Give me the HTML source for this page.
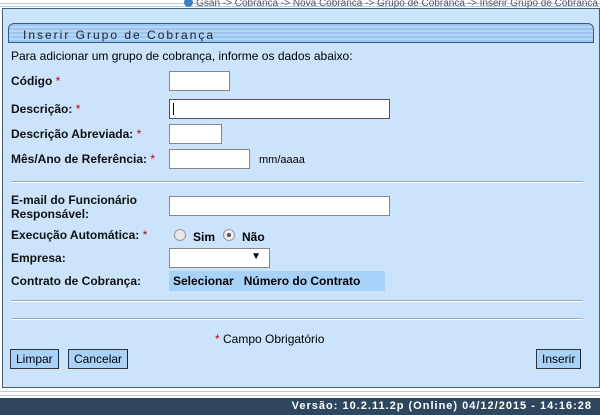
<!DOCTYPE html>
<html><head><meta charset="utf-8"><style>
*{margin:0;padding:0;box-sizing:border-box}
body{width:600px;height:415px;overflow:hidden;background:#fff;font-family:"Liberation Sans",Arial,sans-serif;font-size:12px;color:#000;position:relative}
.a{position:absolute}
.crumb{top:-2px;right:2px;font-size:10px;color:#556;white-space:nowrap}
.topline{top:3px;left:0;width:600px;height:4px;border-top:1px solid #b9cde0;border-bottom:1px solid #b9cde0}
.panel{top:8px;left:2px;width:598px;height:380px;background:#cbe3fb;border:1px solid #3f5f80}
.title{top:23px;left:8px;width:586px;height:20px;border:1px solid #3a5a7a;border-radius:6px 6px 0 0;background:repeating-linear-gradient(#9cc6f0 0 2px,#b6d6f6 2px 4px);font-size:12px;letter-spacing:2px;padding:4px 0 0 14px;color:#223}
.lbl{left:11px;font-weight:bold;font-size:12px;color:#111}
.req{color:#c00;font-weight:normal}
.inp{background:#fff;border:1px solid #888;height:20px}
.sep{left:11px;width:572px;height:2px;border-top:1px solid #9ab;border-bottom:1px solid #fff}
.btn{top:349px;height:20px;background:#a9d2f8;border:1px solid #333;border-right-color:#222;font-size:12px;padding:2px 5px}
.radio{width:12px;height:12px;border-radius:50%;border:1px solid #999;background:#e8e8e8}
.footer{top:398px;left:0;width:600px;height:17px;background:#2f475e;color:#fff;font-weight:bold;font-size:11px;letter-spacing:1px;text-align:right;padding:2px 8px 0 0}
.bottomline{top:391px;left:0;width:600px;height:5px;border-top:1px solid #b9cde0;border-bottom:1px solid #b9cde0}
</style></head><body>
<div class="a topline"></div>
<div class="a crumb"><span style="display:inline-block;width:9px;height:9px;border-radius:50%;background:#3b7fc4;vertical-align:-1px"></span> Gsan -&gt; Cobranca -&gt; Nova Cobranca -&gt; Grupo de Cobranca -&gt; Inserir Grupo de Cobranca</div>
<div class="a panel"></div>
<div class="a title">Inserir Grupo de Cobrança</div>
<div class="a" style="top:49px;left:11px">Para adicionar um grupo de cobrança, informe os dados abaixo:</div>
<div class="a lbl" style="top:74px">Código <span class="req">*</span></div>
<div class="a inp" style="top:71px;left:169px;width:61px"></div>
<div class="a lbl" style="top:102px">Descrição: <span class="req">*</span></div>
<div class="a inp" style="top:99px;left:169px;width:221px;border-color:#555"><div style="position:absolute;left:3px;top:3px;width:1px;height:12px;background:#000"></div></div>
<div class="a lbl" style="top:127px">Descrição Abreviada: <span class="req">*</span></div>
<div class="a inp" style="top:124px;left:169px;width:53px"></div>
<div class="a lbl" style="top:152px">Mês/Ano de Referência: <span class="req">*</span></div>
<div class="a inp" style="top:149px;left:169px;width:81px"></div>
<div class="a" style="top:154px;left:259px;font-size:11px">mm/aaaa</div>
<div class="a sep" style="top:181px"></div>
<div class="a lbl" style="top:193px;line-height:14px">E-mail do Funcionário<br>Responsável:</div>
<div class="a inp" style="top:196px;left:169px;width:221px"></div>
<div class="a lbl" style="top:228px">Execução Automática: <span class="req">*</span></div>
<div class="a radio" style="top:229px;left:174px"></div>
<div class="a" style="top:230px;left:193px;font-weight:bold">Sim</div>
<div class="a radio" style="top:229px;left:223px;background:#eee"><div style="position:absolute;left:3px;top:3px;width:4px;height:4px;border-radius:50%;background:#555"></div></div>
<div class="a" style="top:230px;left:242px;font-weight:bold">Não</div>
<div class="a lbl" style="top:251px">Empresa:</div>
<div class="a inp" style="top:248px;left:169px;width:101px"><span style="position:absolute;right:8px;top:2px;font-size:10px">▼</span></div>
<div class="a lbl" style="top:274px">Contrato de Cobrança:</div>
<div class="a" style="top:271px;left:169px;width:216px;height:20px;background:#a9d2f8;font-weight:bold;padding:3px 0 0 4px">Selecionar &nbsp;&nbsp;Número do Contrato</div>
<div class="a sep" style="top:300px"></div>
<div class="a sep" style="top:318px"></div>
<div class="a" style="top:332px;left:215px"><span style="color:#c00">*</span> Campo Obrigatório</div>
<div class="a btn" style="left:10px">Limpar</div>
<div class="a btn" style="left:68px">Cancelar</div>
<div class="a btn" style="left:536px">Inserir</div>
<div class="a bottomline"></div>
<div class="a footer">Versão: 10.2.11.2p (Online) 04/12/2015 - 14:16:28</div>
</body></html>
